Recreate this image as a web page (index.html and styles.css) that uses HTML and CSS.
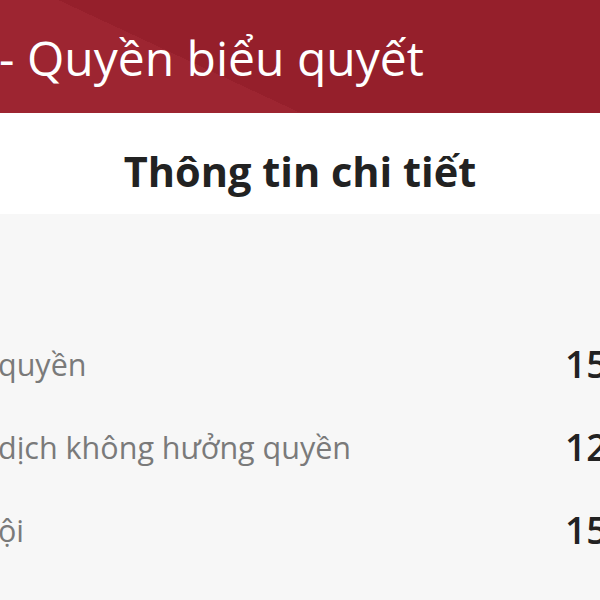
FILE: index.html
```html
<!DOCTYPE html>
<html lang="vi">
<head>
<meta charset="utf-8">
<link rel="stylesheet" href="styles.css">
</head>
<body>
<div class="page">
  <header class="hero">
    <h1 class="hero-title">- Quyền biểu quyết</h1>
  </header>
  <section class="detail-head">
    <h2 class="detail-title">Thông tin chi tiết</h2>
  </section>
  <section class="detail-body">
    <div class="row"><span class="label">quyền</span><span class="value">15</span></div>
    <div class="row"><span class="label">dịch không hưởng quyền</span><span class="value">12</span></div>
    <div class="row"><span class="label">ội</span><span class="value">15</span></div>
  </section>
</div>
</body>
</html>
```
FILE: styles.css
```css
html, body {
  margin: 0;
  padding: 0;
  width: 600px;
  height: 600px;
  overflow: hidden;
  background: #f7f7f7;
  font-family: "Open Sans", "Noto Sans", sans-serif;
}
.page {
  width: 600px;
  height: 600px;
  overflow: hidden;
  display: flex;
  flex-direction: column;
}
.hero {
  height: 113px;
  flex: none;
  background: linear-gradient(25deg, #9d2531 35.7%, #951f2b 35.7%);
  display: flex;
  align-items: flex-start;
}
.hero-title {
  margin: 0 0 0 -1px;
  padding-top: 27px;
  font-size: 48px;
  line-height: 1.3;
  font-weight: 400;
  color: #ffffff;
  white-space: nowrap;
}
.detail-head {
  height: 101px;
  flex: none;
  background: #ffffff;
  display: flex;
  justify-content: center;
}
.detail-title {
  margin: 0;
  padding-top: 32px;
  font-size: 41.5px;
  line-height: 1.3;
  font-weight: 700;
  color: #222222;
}
.detail-body {
  flex: 1;
  background: #f7f7f7;
  display: flex;
  flex-direction: column;
  padding-top: 130px;
}
.row {
  height: 83px;
  flex: none;
  display: flex;
  align-items: flex-start;
  white-space: nowrap;
}
.label {
  width: 567px;
  flex: none;
  margin-left: -2px;
  font-size: 30.5px;
  line-height: 40px;
  color: #7a7a7a;
}
.value {
  font-size: 37px;
  line-height: 40px;
  font-weight: 600;
  color: #222222;
}
```
